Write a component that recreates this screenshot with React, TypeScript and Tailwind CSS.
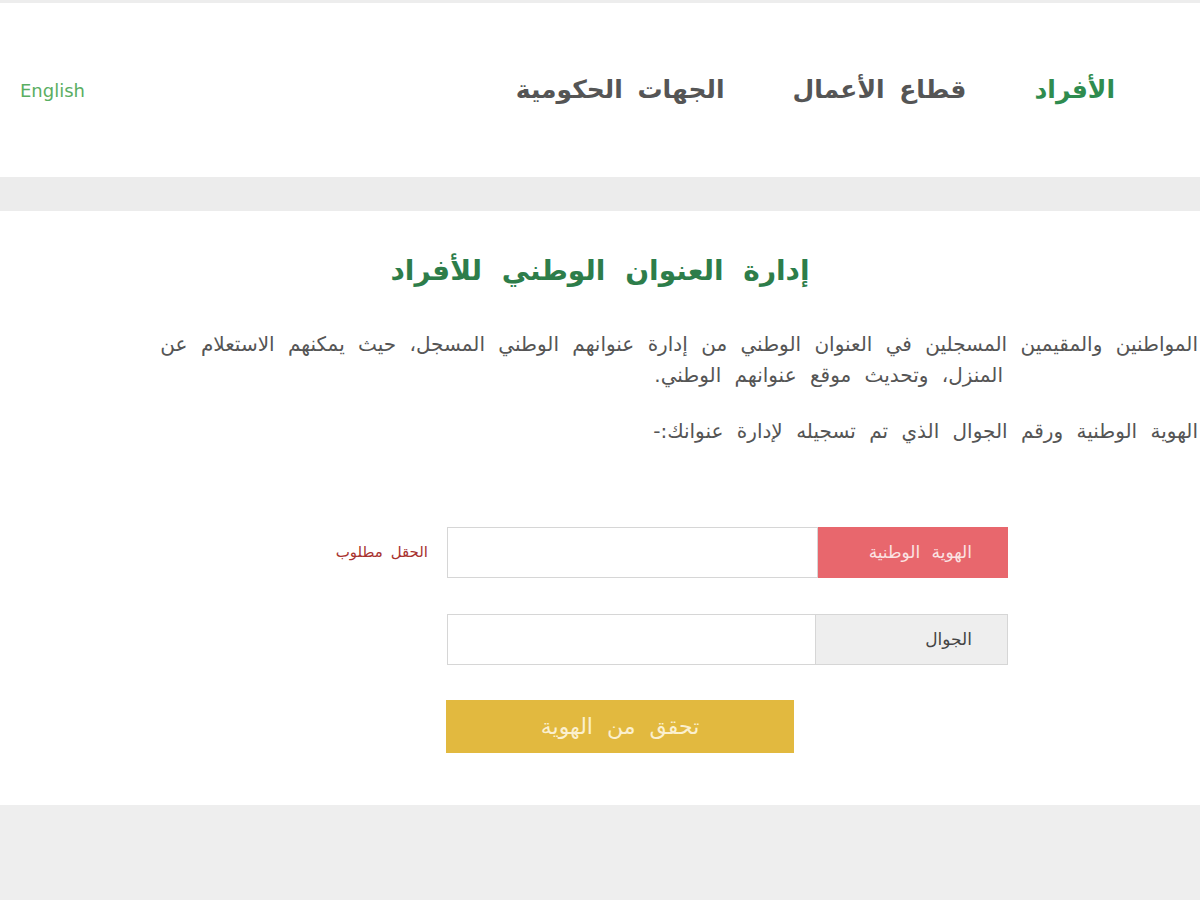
import React from "react";

export default function App() {
  const ar = { fontFamily: '"DejaVu Sans", "Noto Sans", sans-serif' } as React.CSSProperties;
  return (
    <div className="w-[1200px] h-[900px] overflow-hidden bg-white flex flex-col" style={ar}>
      <div className="h-[3px] bg-[#ededed]" />
      <header className="h-[174px] flex items-center justify-between pl-[20px] pr-[85px]">
        <a className="text-[18px] text-[#5aae62]">English</a>
        <nav dir="rtl" className="flex items-center gap-[68px] text-[25px] font-bold [word-spacing:6px]">
          <span className="text-[#2f8c4f]">الأفراد</span>
          <span className="text-[#555555]">قطاع الأعمال</span>
          <span className="text-[#555555]">الجهات الحكومية</span>
        </nav>
      </header>
      <div className="h-[34px] bg-[#ececec]" />
      <main className="h-[594px] bg-white flex flex-col">
        <h1 dir="rtl" className="mt-[40px] text-center text-[28px] font-bold text-[#2d7d4a] leading-[40px] [word-spacing:10px]">
          إدارة العنوان الوطني للأفراد
        </h1>
        <div dir="rtl" className="mt-[38px] flex flex-col text-[20px] text-[#555555] leading-[31px] whitespace-nowrap [word-spacing:7px]">
          <div className="pr-[2px]">
            المواطنين والمقيمين المسجلين في العنوان الوطني من إدارة عنوانهم الوطني المسجل، حيث يمكنهم الاستعلام عن
          </div>
          <div className="pr-[197px]">المنزل، وتحديث موقع عنوانهم الوطني.</div>
          <div className="pr-[2px] mt-[25px]">الهوية الوطنية ورقم الجوال الذي تم تسجيله لإدارة عنوانك:-</div>
        </div>
        <div className="mt-[80px] flex flex-col">
          <div className="flex items-center ml-[318px]">
            <div dir="rtl" className="w-[129px] pr-[19px] text-[15px] text-[#a8322f] [word-spacing:3px]">الحقل مطلوب</div>
            <div className="w-[371px] h-[51px] border border-[#d6d6d6] bg-white" />
            <div dir="rtl" className="w-[190px] h-[51px] bg-[#e8676d] flex items-center pr-[36px] text-[17px] text-[#fbe3e3] [word-spacing:6px]">
              الهوية الوطنية
            </div>
          </div>
          <div className="flex items-center ml-[447px] mt-[36px]">
            <div className="w-[369px] h-[51px] border border-[#d6d6d6] bg-white" />
            <div dir="rtl" className="w-[192px] h-[51px] bg-[#eeeeee] border border-[#d6d6d6] border-l-0 flex items-center pr-[35px] text-[17px] text-[#444444]">
              الجوال
            </div>
          </div>
          <button dir="rtl" className="ml-[446px] mt-[35px] w-[348px] h-[53px] bg-[#e2b93f] text-[22px] text-[#fbf0cf] flex items-center justify-center [word-spacing:7px]">
            تحقق من الهوية
          </button>
        </div>
      </main>
      <div className="flex-1 bg-[#eeeeee]" />
    </div>
  );
}
